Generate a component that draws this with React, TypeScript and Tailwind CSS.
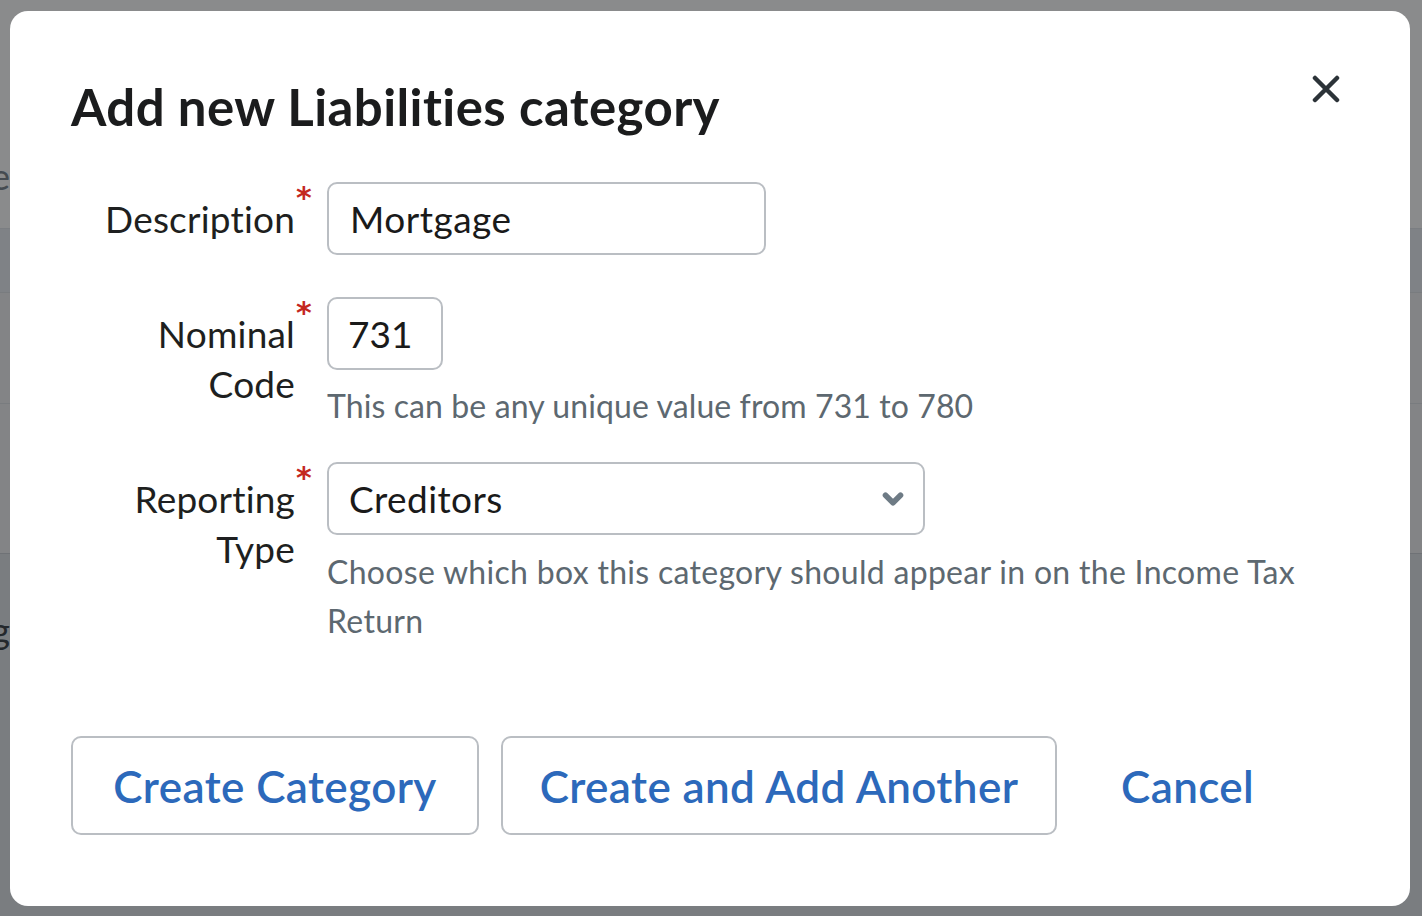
import { ChevronDown } from 'lucide-react';

const font = { fontFamily: 'Lato, "Noto Sans", sans-serif' };

function Label({ lines }: { lines: string[] }) {
  return (
    <div className="w-[224px] shrink-0 pt-[12px] text-right text-[37px] leading-[50px] tracking-[0.2px] text-[#1e1f20]">
      <span className="relative inline-block">
        {lines[0]}
        <span
          className="absolute left-[calc(100%+1px)] top-[-11px] text-[30px] leading-none font-bold text-[#c4271f]"
          style={{ fontFamily: '"DejaVu Sans", sans-serif' }}
        >
          *
        </span>
      </span>
      {lines.slice(1).map((l) => (
        <div key={l}>{l}</div>
      ))}
    </div>
  );
}

export default function App() {
  return (
    <div className="relative h-[916px] w-full overflow-hidden bg-[#8a8b8c]" style={font}>
      {/* page behind the overlay */}
      <div className="flex h-full flex-col">
        <div className="flex h-[228px] shrink-0 items-end">
          <div className="mb-[32px] flex w-[10px] justify-end overflow-hidden">
            <span className="shrink-0 whitespace-nowrap text-[36px] leading-[40px] text-[#454b51]">Reference</span>
          </div>
        </div>
        <div className="h-[64px] shrink-0 border-t border-[#7b7e82] bg-[#7f8286]" />
        <div className="h-[111px] shrink-0 border-t border-[#797c7f] bg-[#838486]" />
        <div className="h-[150px] shrink-0 border-t border-[#797c7f] bg-[#838486]" />
        <div className="flex-1 border-t border-[#6f7276] bg-[#7a7d80]">
          <div className="mt-[56px] flex w-[10px] justify-end overflow-hidden">
            <span className="shrink-0 whitespace-nowrap text-[36px] leading-[40px] text-[#24282c]">Mortgag</span>
          </div>
        </div>
      </div>

      {/* modal */}
      <div className="absolute left-[10px] top-[11px] h-[895px] w-[1400px] rounded-[18px] bg-white pl-[61px] pr-[60px] pt-[66px]">
        <div className="flex items-start justify-between">
          <h1 className="text-[51px] font-bold leading-[60px] tracking-[0.4px] text-[#1b1c1d]">Add new Liabilities category</h1>
          <button className="mr-[10px] mt-[-2px] text-[#2c3338]" aria-label="Close">
            <svg width="28" height="28" viewBox="0 0 28 28" fill="none" stroke="currentColor" strokeWidth="4.5" strokeLinecap="round">
              <path d="M3 3L25 25M25 3L3 25" />
            </svg>
          </button>
        </div>

        <div className="mt-[45px]">
          {/* Description */}
          <div className="mb-[42px] flex items-start gap-[32px]">
            <Label lines={['Description']} />
            <div className="flex h-[73px] w-[439px] items-center rounded-[10px] border-2 border-[#babec3] px-[21px] text-[37px] tracking-[0.5px] text-[#1a1a1a]">
              Mortgage
            </div>
          </div>

          {/* Nominal code */}
          <div className="mb-[31px] flex items-start gap-[32px]">
            <Label lines={['Nominal', 'Code']} />
            <div>
              <div className="flex h-[73px] w-[116px] items-center rounded-[10px] border-2 border-[#babec3] px-[19px] text-[37px] text-[#1a1a1a]">
                731
              </div>
              <p className="mt-[11px] text-[32px] leading-[50px] tracking-[0.1px] text-[#5d6870]">
                This can be any unique value from 731 to 780
              </p>
            </div>
          </div>

          {/* Reporting type */}
          <div className="flex items-start gap-[32px]">
            <Label lines={['Reporting', 'Type']} />
            <div>
              <div className="flex h-[73px] w-[598px] items-center justify-between rounded-[10px] border-2 border-[#babec3] pl-[20px] pr-[15px] text-[37px] tracking-[0.4px] text-[#1a1a1a]">
                <span>Creditors</span>
                <ChevronDown className="h-[30px] w-[30px] text-[#6e7b85]" strokeWidth={4.5} />
              </div>
              <p className="mt-[12px] text-[32px] leading-[49px] tracking-[0.3px] text-[#5d6870]">
                Choose which box this category should appear in on the Income Tax
                <br />
                Return
              </p>
            </div>
          </div>
        </div>

        {/* actions */}
        <div className="mt-[91px] flex gap-[22px] text-[44px] font-semibold tracking-[0.4px] text-[#2c69bb]">
          <button className="h-[99px] w-[408px] rounded-[10px] border-2 border-[#babec3]">Create Category</button>
          <button className="h-[99px] w-[556px] rounded-[10px] border-2 border-[#babec3]">Create and Add Another</button>
          <button className="h-[99px] px-[42px]">Cancel</button>
        </div>
      </div>
    </div>
  );
}
